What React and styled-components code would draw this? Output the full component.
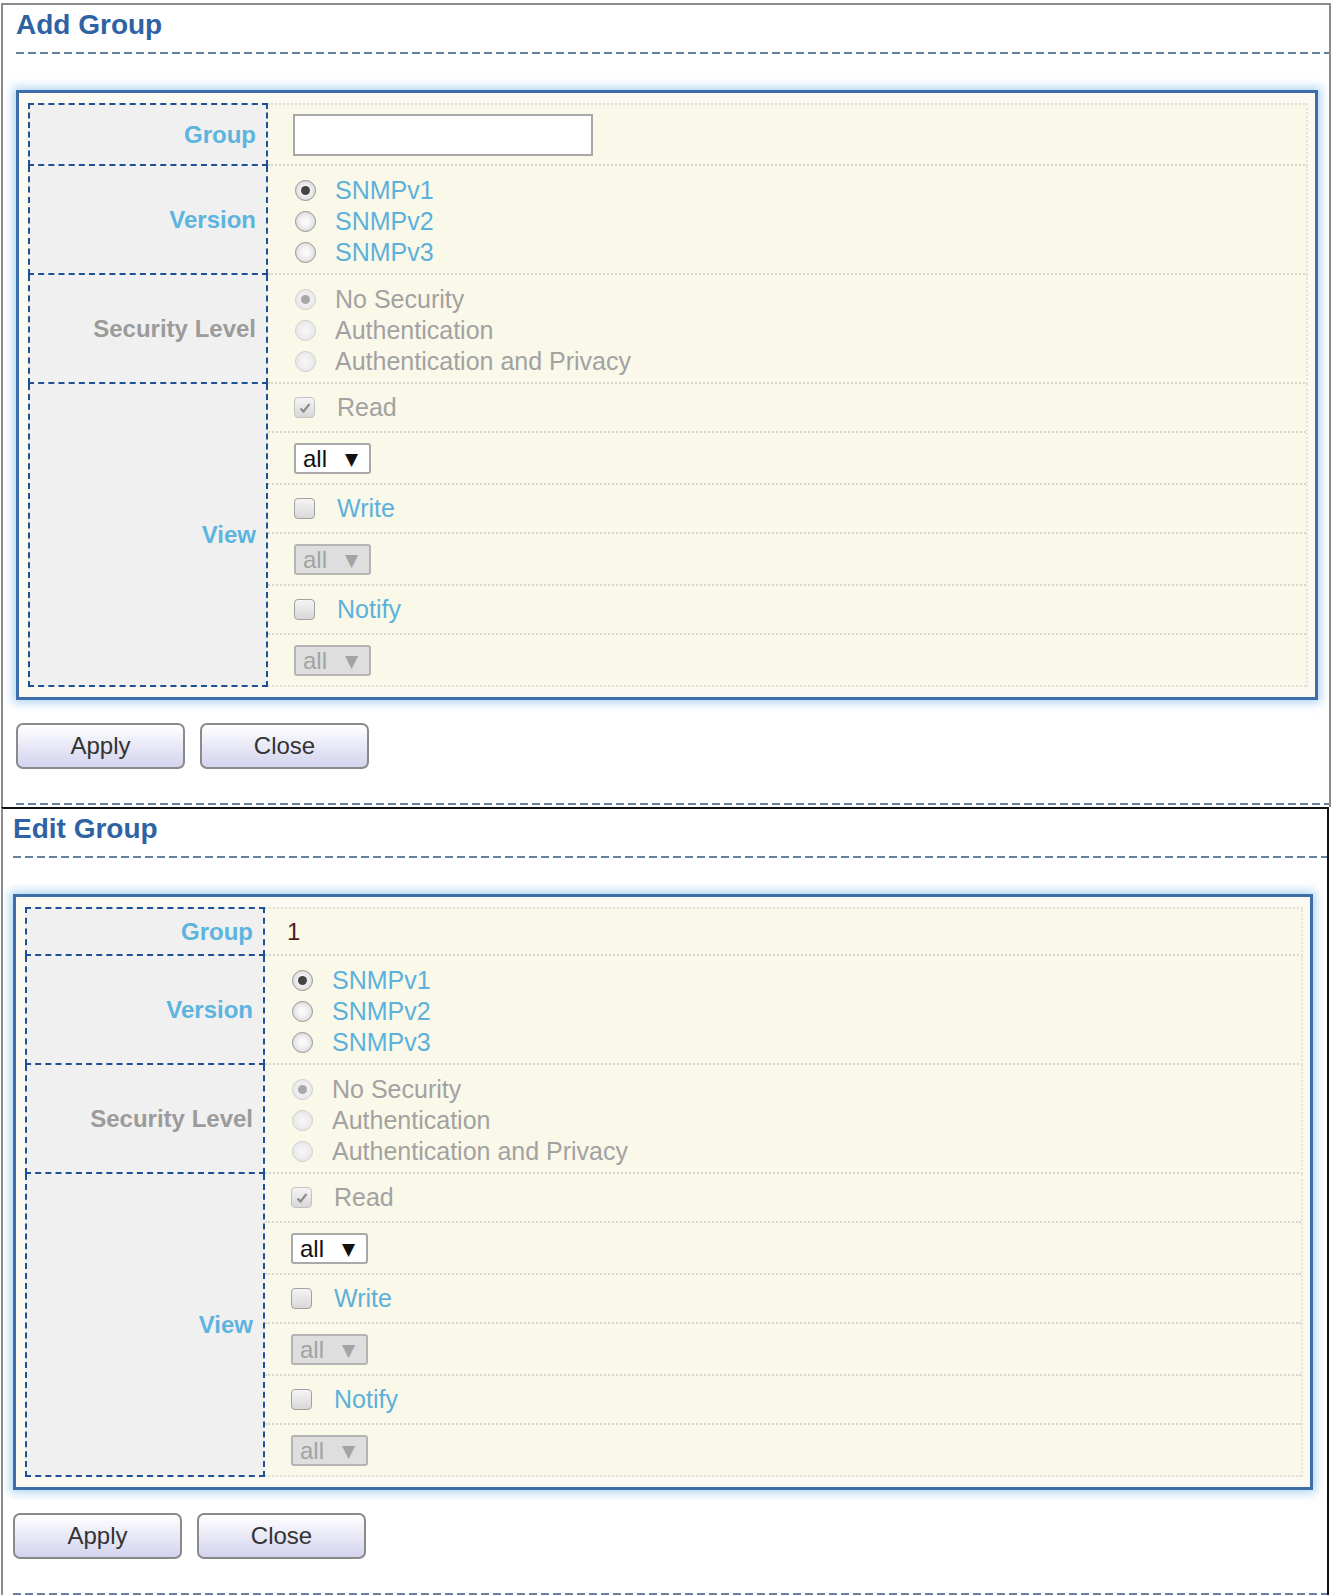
import React from "react"
import styled, { createGlobalStyle } from "styled-components"

const VERSIONS = ["SNMPv1", "SNMPv2", "SNMPv3"]
const LEVELS = ["No Security", "Authentication", "Authentication and Privacy"]

function Radio({ checked, disabled }) {
  return <RadioDot $checked={checked} $disabled={disabled} />
}

function Check({ checked, disabled }) {
  return (
    <CheckBox $disabled={disabled}>
      {checked && (
        <svg width="14" height="14" viewBox="0 0 14 14">
          <path d="M2.5 7.5 L5.5 10.5 L11.5 3" fill="none" stroke="#8d8d8d" strokeWidth="2.2" />
        </svg>
      )}
    </CheckBox>
  )
}

function ViewSelect({ disabled }) {
  return (
    <SelectBox $disabled={disabled}>
      all <Arrow>▼</Arrow>
    </SelectBox>
  )
}

function GroupForm({ title, editing, inset, gutter, edge }) {
  return (
    <Screen $inset={inset} $edge={edge}>
      <Title>{title}</Title>
      <Rule />
      <Panel $gutter={gutter}>
        <Grid>
          <Label $first>Group</Label>
          <Cell $first $pad={editing ? "7px 0 7px" : "9px 0 8px"}>
            {editing ? <Value>1</Value> : <TextInput type="text" />}
          </Cell>

          <Label>Version</Label>
          <Cell $pad="9px 0 5px">
            {VERSIONS.map((v, i) => (
              <Option key={v}>
                <Radio checked={i === 0} />
                {v}
              </Option>
            ))}
          </Cell>

          <Label $muted>Security Level</Label>
          <Cell $pad="9px 0 5px">
            {LEVELS.map((l, i) => (
              <Option key={l} $muted>
                <Radio checked={i === 0} disabled />
                {l}
              </Option>
            ))}
          </Cell>

          <Label>View</Label>
          <ViewCell>
            <SubRow>
              <Option $muted>
                <Check checked disabled />
                Read
              </Option>
            </SubRow>
            <SubRow $select>
              <ViewSelect />
            </SubRow>
            <SubRow>
              <Option>
                <Check />
                Write
              </Option>
            </SubRow>
            <SubRow $select>
              <ViewSelect disabled />
            </SubRow>
            <SubRow>
              <Option>
                <Check />
                Notify
              </Option>
            </SubRow>
            <SubRow $select $last>
              <ViewSelect disabled />
            </SubRow>
          </ViewCell>
        </Grid>
      </Panel>
      <Buttons>
        <Button type="button">Apply</Button>
        <Button type="button">Close</Button>
      </Buttons>
      <Rule $tail />
    </Screen>
  )
}

export default function App() {
  return (
    <>
      <GlobalStyle />
      <GroupForm title="Add Group" inset={13} gutter={11} edge="#8c8c8c" />
      <GroupForm title="Edit Group" editing inset={10} gutter={14} edge="#111" />
    </>
  )
}

const GlobalStyle = createGlobalStyle`
  html, body {
    margin: 0;
    background: #fff;
  }
  body {
    padding-top: 3px;
    font-family: "Liberation Sans", Arial, sans-serif;
  }
`

const Screen = styled.section`
  margin: 0 ${(p) => (p.$edge === "#111" ? 3 : 1)}px 0 1px;
  padding: 0 0 2px ${(p) => p.$inset}px;
  border-top: 2px solid ${(p) => p.$edge};
  border-left: 2px solid #8c8c8c;
  border-right: 2px solid ${(p) => p.$edge};
`

const Title = styled.h2`
  margin: 0;
  padding-top: 4px;
  font-size: 28px;
  line-height: 32px;
  font-weight: bold;
  color: #2f62a2;
`

const Rule = styled.div`
  height: 2px;
  margin-top: ${(p) => (p.$tail ? 34 : 11)}px;
  background: repeating-linear-gradient(to right, #67829f 0 8px, transparent 8px 12px);
`

const Panel = styled.div`
  margin: 36px ${(p) => p.$gutter}px 0 0;
  padding: 10px 7px 10px 9px;
  border: 3px solid #3d6ea9;
  background: #fbfaf2;
  box-shadow: 0 0 9px 3px rgba(128, 186, 235, 0.6);
`

const Grid = styled.div`
  display: grid;
  grid-template-columns: 240px 1fr;
`

const Label = styled.div`
  display: flex;
  align-items: center;
  justify-content: flex-end;
  padding-right: 10px;
  background: #f0f0f0;
  border-left: 2px dashed #1f4f95;
  border-right: 2px dashed #1f4f95;
  border-top: ${(p) => (p.$first ? "2px dashed #1f4f95" : "0")};
  border-bottom: 2px dashed #1f4f95;
  font-size: 24px;
  font-weight: bold;
  color: ${(p) => (p.$muted ? "#9b9b9b" : "#5db4de")};
`

const Cell = styled.div`
  padding: ${(p) => p.$pad};
  padding-left: 22px;
  background: #faf8e9;
  border-top: ${(p) => (p.$first ? "2px dotted #e2e0d2" : "0")};
  border-right: 2px dotted #e6e4d6;
  border-bottom: 2px dotted #d8d7cc;
`

const ViewCell = styled.div`
  display: flex;
  flex-direction: column;
  background: #faf8e9;
  border-right: 2px dotted #e6e4d6;
`

const SubRow = styled.div`
  padding: ${(p) => (p.$select ? "10px 0 9px 22px" : "8px 0 8px 22px")};
  border-bottom: 2px dotted ${(p) => (p.$last ? "#e2e0d2" : "#d8d7cc")};
`

const Option = styled.div`
  display: flex;
  align-items: center;
  height: 31px;
  font-size: 25px;
  white-space: nowrap;
  color: ${(p) => (p.$muted ? "#a2a2a2" : "#5cb1da")};
`

const RadioDot = styled.span`
  position: relative;
  flex: none;
  box-sizing: border-box;
  width: 21px;
  height: 21px;
  margin: 0 19px 0 5px;
  border-radius: 50%;
  border: 1.5px solid ${(p) => (p.$disabled ? "#cdcdcd" : "#939393")};
  background: ${(p) =>
    p.$disabled ? "radial-gradient(#f7f7f7, #e4e4e4)" : "radial-gradient(#f8f8f8 25%, #cfcfcf)"};

  &::after {
    content: "";
    display: ${(p) => (p.$checked ? "block" : "none")};
    position: absolute;
    left: 50%;
    top: 50%;
    width: 9px;
    height: 9px;
    margin: -4.5px 0 0 -4.5px;
    border-radius: 50%;
    background: ${(p) => (p.$disabled ? "#a8a8a8" : "#444")};
  }
`

const CheckBox = styled.span`
  display: flex;
  flex: none;
  align-items: center;
  justify-content: center;
  box-sizing: border-box;
  width: 21px;
  height: 21px;
  margin: 0 22px 0 4px;
  border-radius: 4px;
  border: 1.5px solid ${(p) => (p.$disabled ? "#c2c2c2" : "#a0a0a0")};
  background: linear-gradient(#f5f5f5, #d8d8d8);
`

const SelectBox = styled.div`
  display: flex;
  align-items: center;
  justify-content: space-between;
  box-sizing: border-box;
  width: 77px;
  height: 31px;
  margin-left: 4px;
  padding: 0 11px 0 7px;
  border: 2px solid ${(p) => (p.$disabled ? "#b4b4b4" : "#a9a9a9")};
  border-radius: 3px;
  background: ${(p) => (p.$disabled ? "#dedede" : "#fff")};
  font-size: 24px;
  color: ${(p) => (p.$disabled ? "#a3a3a3" : "#111")};
`

const Arrow = styled.span`
  font-family: "DejaVu Sans", sans-serif;
  font-size: 17px;
  color: inherit;
`

const TextInput = styled.input`
  display: block;
  box-sizing: border-box;
  width: 300px;
  height: 42px;
  margin-left: 3px;
  border: 2px solid #a8a8a8;
  background: #fff;
  font-size: 22px;
`

const Value = styled.div`
  height: 31px;
  line-height: 31px;
  font-size: 24px;
  color: #4a1f1f;
`

const Buttons = styled.div`
  display: flex;
  gap: 15px;
  margin-top: 23px;
`

const Button = styled.button`
  width: 169px;
  height: 46px;
  padding: 0;
  border: 2px solid #8a8a8a;
  border-radius: 7px;
  background: linear-gradient(#ffffff, #ebebf8 45%, #d3d3ee);
  font-family: "Liberation Sans", Arial, sans-serif;
  font-size: 24px;
  color: #333;
`
